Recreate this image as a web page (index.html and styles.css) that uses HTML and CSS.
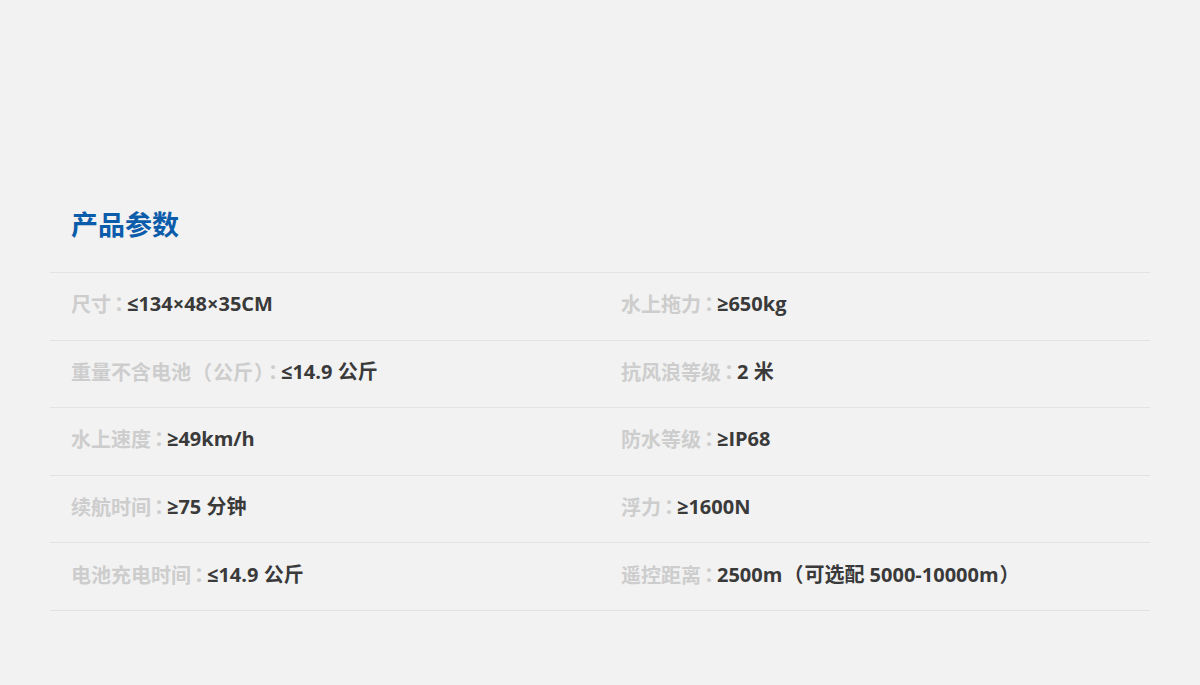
FILE: index.html
```html
<!DOCTYPE html>
<html lang="zh-CN">
<head>
<meta charset="utf-8">
<title>产品参数</title>
<link rel="stylesheet" href="styles.css">
</head>
<body>
<section class="params">
  <h2 class="params-title">产品参数</h2>
  <div class="params-grid">
    <div class="row">
      <div class="cell"><span class="label">尺寸<span class="colon" lang="zh-Hant">：</span></span><span class="value">≤134×48×35CM</span></div>
      <div class="cell"><span class="label">水上拖力<span class="colon" lang="zh-Hant">：</span></span><span class="value">≥650kg</span></div>
    </div>
    <div class="row">
      <div class="cell"><span class="label">重量不含电池<span class="paren" lang="zh-Hant">（</span>公斤<span class="paren" lang="zh-Hant">）</span><span class="colon" lang="zh-Hant">：</span></span><span class="value">≤14.9 公斤</span></div>
      <div class="cell"><span class="label">抗风浪等级<span class="colon" lang="zh-Hant">：</span></span><span class="value">2 米</span></div>
    </div>
    <div class="row">
      <div class="cell"><span class="label">水上速度<span class="colon" lang="zh-Hant">：</span></span><span class="value">≥49km/h</span></div>
      <div class="cell"><span class="label">防水等级<span class="colon" lang="zh-Hant">：</span></span><span class="value">≥IP68</span></div>
    </div>
    <div class="row">
      <div class="cell"><span class="label">续航时间<span class="colon" lang="zh-Hant">：</span></span><span class="value">≥75 分钟</span></div>
      <div class="cell"><span class="label">浮力<span class="colon" lang="zh-Hant">：</span></span><span class="value">≥1600N</span></div>
    </div>
    <div class="row">
      <div class="cell"><span class="label">电池充电时间<span class="colon" lang="zh-Hant">：</span></span><span class="value">≤14.9 公斤</span></div>
      <div class="cell"><span class="label">遥控距离<span class="colon" lang="zh-Hant">：</span></span><span class="value">2500m<span class="vparen">（</span>可选配 5000-10000m<span class="vparen">）</span></span></div>
    </div>
  </div>
</section>
</body>
</html>
```

FILE: styles.css
```css
html, body {
  margin: 0;
  padding: 0;
  background: #f2f2f2;
}
body {
  width: 1200px;
  height: 685px;
  font-family: "Open Sans", "Noto Sans CJK SC", sans-serif;
}
.params {
  padding: 204px 50px 0 50px;
}
.params-title {
  margin: 0 0 0 21px;
  font-family: "Noto Sans CJK SC", sans-serif;
  font-size: 27px;
  line-height: 40px;
  font-weight: 700;
  color: #0b5cab;
}
.params-grid {
  margin-top: 28px;
  border-top: 1px solid #e2e2e2;
}
.row {
  display: flex;
  height: 66.6px;
  border-bottom: 1px solid #e2e2e2;
}
.cell {
  flex: 1;
  display: flex;
  align-items: center;
  padding-left: 21px;
  padding-bottom: 4px;
  box-sizing: border-box;
  font-size: 20px;
  line-height: 26px;
  font-weight: 700;
  white-space: nowrap;
}
.label {
  color: #cdcdcd;
  font-family: "Noto Sans CJK SC", sans-serif;
}
.colon,
.paren {
  font-family: "Noto Sans CJK TC", "Noto Sans CJK SC", sans-serif;
}
.colon {
  font-feature-settings: "halt" 1;
  margin: 0 3px;
}
.paren {
  margin: 0 1px;
}
.value {
  color: #3a3a3a;
}
.vparen {
  font-family: "Noto Sans CJK SC", sans-serif;
  margin: 0 1px;
}
```
